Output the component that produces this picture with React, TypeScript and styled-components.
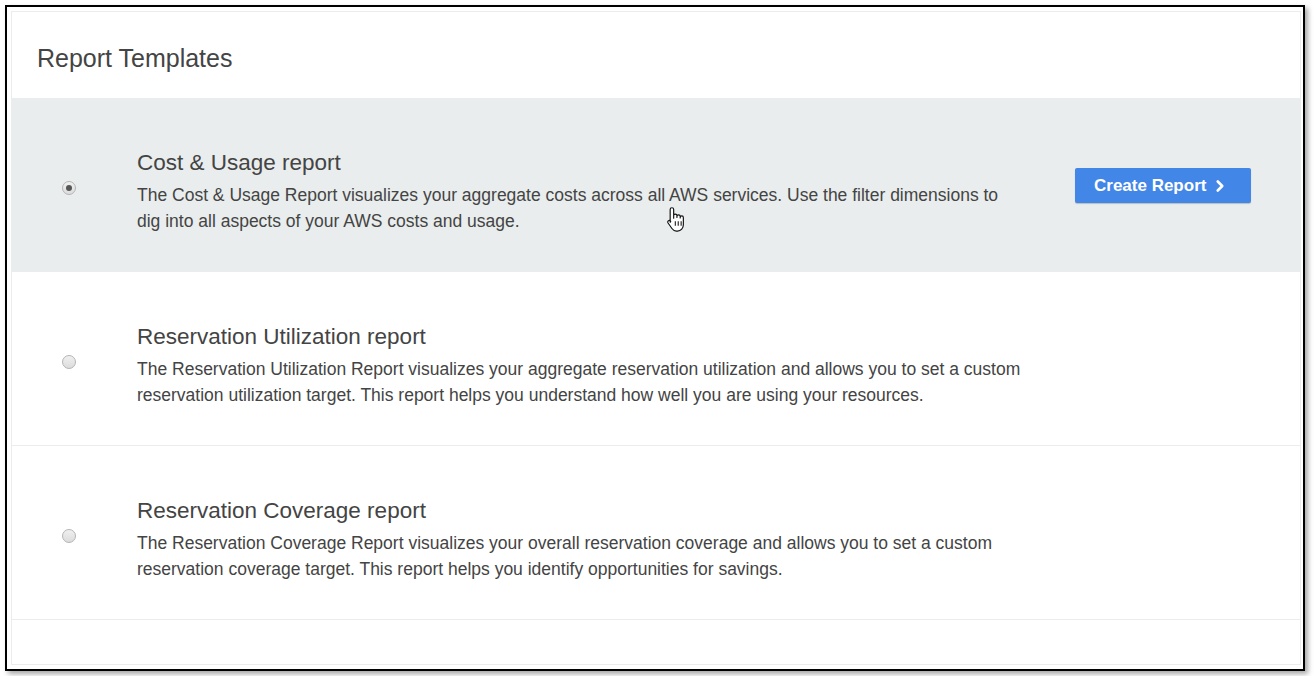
import * as React from 'react'
import styled, { createGlobalStyle } from 'styled-components'
import { ChevronRight } from 'lucide-react'

const GlobalStyle = createGlobalStyle`
    html, body {
        margin: 0;
        padding: 0;
        background: #ffffff;
        font-family: 'Liberation Sans', Arial, sans-serif;
    }
`

const Frame = styled.div`
    box-sizing: border-box;
    width: 1300px;
    height: 666px;
    margin: 5px;
    border: 2px solid #000;
    box-shadow: 3px 3px 5px rgba(0, 0, 0, 0.35);
    padding: 4px 2px 4px 4px;
    background: #fff;
`

const Panel = styled.div`
    box-sizing: border-box;
    height: 100%;
    border: 1px solid #ececec;
    background: #fff;
`

const Header = styled.div`
    box-sizing: border-box;
    height: 86px;
    display: flex;
    align-items: center;
    padding-left: 25px;
    padding-top: 6px;
`

const HeaderTitle = styled.h2`
    margin: 0;
    font-size: 25px;
    font-weight: 400;
    color: #444;
`

const Row = styled.div<{ $active?: boolean }>`
    position: relative;
    box-sizing: border-box;
    height: 174px;
    display: flex;
    align-items: center;
    padding: 6px 49px 0 50px;
    background: ${p => (p.$active ? '#e9eded' : '#fff')};
    border-bottom: 1px solid ${p => (p.$active ? '#e9eded' : '#ececec')};
`

const Radio = styled.span<{ $checked?: boolean }>`
    box-sizing: border-box;
    flex: none;
    width: 14px;
    height: 14px;
    border-radius: 50%;
    border: 1px solid #b4b4b4;
    background: linear-gradient(#f0f0f0, #dcdcdc);
    display: flex;
    align-items: center;
    justify-content: center;

    &::after {
        content: '';
        display: ${p => (p.$checked ? 'block' : 'none')};
        width: 6px;
        height: 6px;
        border-radius: 50%;
        background: #555;
    }
`

const TextBlock = styled.div`
    flex: 0 1 888px;
    margin-left: 61px;
    padding-top: 7px;
`

const Title = styled.div`
    font-size: 22.5px;
    line-height: 28px;
    color: #444;
    margin-bottom: 5px;
`

const Description = styled.div`
    font-size: 17.5px;
    line-height: 26px;
    color: #444;
`

const Spacer = styled.div`
    flex: 1;
`

const CreateButton = styled.button`
    box-sizing: border-box;
    width: 176px;
    height: 35px;
    margin-top: -4px;
    display: flex;
    align-items: center;
    gap: 5px;
    padding: 0 0 0 19px;
    border: none;
    border-radius: 2px;
    background: #4286e8;
    color: #fff;
    font-family: 'Liberation Sans', Arial, sans-serif;
    font-size: 17px;
    font-weight: 700;
    box-shadow: 0 1px 1px rgba(0, 0, 0, 0.2);
    cursor: pointer;
`

const Cursor = styled.svg`
    position: absolute;
    left: 653px;
    top: 108px;
`

const HandCursor = () => (
    <Cursor width="22" height="28" viewBox="0 0 18 24">
        <path
            d="M5.5 1.5c.9 0 1.5.6 1.5 1.5v7.5V8.2c0-.8.6-1.3 1.4-1.3s1.4.5 1.4 1.3v1.6-.9c0-.8.6-1.3 1.4-1.3s1.4.5 1.4 1.3v1.4-.5c0-.8.6-1.3 1.3-1.3.8 0 1.4.5 1.4 1.3v6.2c0 3-2 5.5-5 5.5H9.3c-1.7 0-2.8-.8-3.8-2.2L2.2 14.6c-.5-.8-.3-1.6.4-2 .7-.4 1.4-.2 1.9.5L4 14V3c0-.9.6-1.5 1.5-1.5z"
            fill="#fff"
            stroke="#111"
            strokeWidth="1"
            strokeLinejoin="round"
        />
        <path d="M8.4 13v4M10.9 13v4M13.4 13v4" stroke="#111" strokeWidth="0.9" />
    </Cursor>
)

interface Template {
    title: string
    description: string
}

const templates: Template[] = [
    {
        title: 'Cost & Usage report',
        description:
            'The Cost & Usage Report visualizes your aggregate costs across all AWS services. Use the filter dimensions to dig into all aspects of your AWS costs and usage.',
    },
    {
        title: 'Reservation Utilization report',
        description:
            'The Reservation Utilization Report visualizes your aggregate reservation utilization and allows you to set a custom reservation utilization target. This report helps you understand how well you are using your resources.',
    },
    {
        title: 'Reservation Coverage report',
        description:
            'The Reservation Coverage Report visualizes your overall reservation coverage and allows you to set a custom reservation coverage target. This report helps you identify opportunities for savings.',
    },
]

export default function App() {
    const [selected, setSelected] = React.useState(0)

    return (
        <>
            <GlobalStyle />
            <Frame>
                <Panel>
                    <Header>
                        <HeaderTitle>Report Templates</HeaderTitle>
                    </Header>
                    {templates.map((t, i) => (
                        <Row key={t.title} $active={i === selected} onClick={() => setSelected(i)}>
                            <Radio $checked={i === selected} />
                            <TextBlock>
                                <Title>{t.title}</Title>
                                <Description>{t.description}</Description>
                            </TextBlock>
                            <Spacer />
                            {i === selected && (
                                <CreateButton>
                                    Create Report
                                    <ChevronRight size={18} strokeWidth={3.5} />
                                </CreateButton>
                            )}
                            {i === 0 && <HandCursor />}
                        </Row>
                    ))}
                </Panel>
            </Frame>
        </>
    )
}
